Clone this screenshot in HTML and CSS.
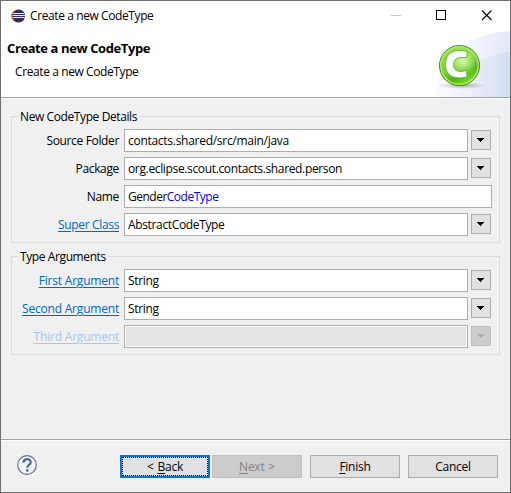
FILE: index.html
```html
<!DOCTYPE html>
<html lang="en">
<head>
<meta charset="utf-8">
<title>Create a new CodeType</title>
<link rel="stylesheet" href="styles.css">
</head>
<body>
<svg width="0" height="0" class="defs">
  <symbol id="arrow" viewBox="0 0 7 4"><path d="M0 0h7v1H6v1H5v1H4v1H3V3H2V2H1V1H0z" shape-rendering="crispEdges"/></symbol>
</svg>
<div class="window">
  <div class="banner">
    <svg class="banner-art" width="75" height="70" viewBox="0 0 75 70">
      <defs>
        <linearGradient id="sweep" x1="0" y1="0" x2="1" y2="0"><stop offset="0" stop-color="#f8fafe"/><stop offset=".55" stop-color="#f1f4fc"/><stop offset="1" stop-color="#e2e9f7"/></linearGradient>
        <linearGradient id="sweep2" x1="0" y1="0" x2="1" y2="0"><stop offset="0" stop-color="#f4f7fd"/><stop offset="1" stop-color="#ccd9f0"/></linearGradient>
        <linearGradient id="ball" x1="0.1" y1="0" x2=".7" y2="1"><stop offset="0" stop-color="#a4e45a"/><stop offset=".5" stop-color="#78d52e"/><stop offset=".75" stop-color="#4cb512"/><stop offset="1" stop-color="#8ce52d"/></linearGradient>
        <radialGradient id="glow" cx=".6" cy=".38" r=".42"><stop offset="0" stop-color="#d9f8b8"/><stop offset="1" stop-color="#c8f294" stop-opacity="0"/></radialGradient>
        <radialGradient id="shadow"><stop offset="0" stop-color="#777" stop-opacity=".65"/><stop offset="1" stop-color="#999" stop-opacity="0"/></radialGradient>
      </defs>
      <path d="M0 70C3 32 34 6 75 4V70z" fill="url(#sweep)"/>
      <path d="M16 70C25 43 45 28 75 25V70z" fill="url(#sweep2)" opacity=".7"/>
      <ellipse cx="27" cy="58.500" rx="24" ry="3.500" fill="url(#shadow)"/>
      <circle cx="24.500" cy="38.500" r="20" fill="url(#ball)" stroke="#587d31"/>
      <circle cx="24.500" cy="38.500" r="18.700" fill="none" stroke="#b5ed67" stroke-width="1.300"/>
      <circle cx="24.500" cy="38.500" r="18" fill="url(#glow)"/>
      <path d="M32.500 24.500l-1 6h-5c-5 0-8 2.500-8 7s2.500 7 7.500 7l5.500-1 .5 6.500c-13 3-21.500-1-21.500-12.500S18 21 32.500 24.500z" fill="#fff" stroke="#56b42a" stroke-width=".9"/>
    </svg>
    <div class="titlebar">
      <svg class="eclipse" width="15" height="14" viewBox="0 0 15 14">
        <circle cx="6.500" cy="7" r="6.500" fill="#f7941e"/><circle cx="7.700" cy="7" r="6.500" fill="#322b66"/>
        <path d="M2 4.500h11.500M1.500 6.500h13M2 8.500h12" stroke="#fff" stroke-width=".9"/>
      </svg>
      <span class="caption">Create a new CodeType</span>
      <svg class="controls" width="102" height="12" viewBox="0 0 102 12">
        <path d="M0 6.500h10" stroke="#c8c8c8" shape-rendering="crispEdges"/>
        <path d="M45.500 1.500h9v9h-9z" fill="none" stroke="#000" shape-rendering="crispEdges"/>
        <path d="M91 1.500l9.500 9.500M100.500 1.500l-9.500 9.500" stroke="#000" stroke-width="1.100"/>
      </svg>
    </div>
    <h1>Create a new CodeType</h1>
    <p>Create a new CodeType</p>
  </div>
  <main>
    <fieldset class="details">
      <legend>New CodeType Details</legend>
      <div class="row"><label>Source Folder</label><div class="field path">contacts.shared/src/main/java</div><button class="drop"><svg width="7" height="4"><use href="#arrow"/></svg></button></div>
      <div class="row"><label>Package</label><div class="field">org.eclipse.scout.contacts.shared.person</div><button class="drop"><svg width="7" height="4"><use href="#arrow"/></svg></button></div>
      <div class="row"><label>Name</label><div class="field wide">Gender<span class="suffix">CodeType</span></div></div>
      <div class="row"><label><a>Super Class</a></label><div class="field">AbstractCodeType</div><button class="drop"><svg width="7" height="4"><use href="#arrow"/></svg></button></div>
    </fieldset>
    <fieldset class="arguments">
      <legend>Type Arguments</legend>
      <div class="row"><label><a>First Argument</a></label><div class="field">String</div><button class="drop"><svg width="7" height="4"><use href="#arrow"/></svg></button></div>
      <div class="row"><label><a>Second Argument</a></label><div class="field">String</div><button class="drop"><svg width="7" height="4"><use href="#arrow"/></svg></button></div>
      <div class="row disabled"><label><a>Third Argument</a></label><div class="field"></div><button class="drop"><svg width="7" height="4"><use href="#arrow"/></svg></button></div>
    </fieldset>
  </main>
  <footer>
    <svg class="help" width="21" height="21" viewBox="0 0 21 21"><circle cx="10" cy="10" r="9.300" fill="#f3f5f8" stroke="#62738f" stroke-width="1.200"/><path d="M6.500 7.700C6.500 3 13.700 3 13.700 7.200C13.700 10 10.300 9.800 10.300 12.700" fill="none" stroke="#566c92" stroke-width="2.300"/><circle cx="10.300" cy="15.500" r="1.400" fill="#566c92"/></svg>
    <button class="push default">&lt; <u>B</u>ack</button>
    <button class="push next"><u>N</u>ext &gt;</button>
    <button class="push"><u>F</u>inish</button>
    <button class="push cancel">Cancel</button>
  </footer>
</div>
</body>
</html>
```
FILE: styles.css
```css
* { box-sizing: border-box; }
body {
  margin: 0;
  font: 12px/16px "Open Sans", "Noto Sans", sans-serif;
  letter-spacing: -0.35px;
  color: #000;
  overflow: hidden;
}
.defs { position: absolute; }
.window {
  width: 511px;
  height: 493px;
  display: flex;
  flex-direction: column;
  border: 1px solid #6e6e6e;
  background: #f0f0f0;
}
.banner {
  position: relative;
  height: 97px;
  background: #fff;
  border-bottom: 1px solid #a0a0a0;
}
.banner-art { position: absolute; right: 0; bottom: 0; }
.titlebar {
  position: relative;
  display: flex;
  height: 30px;
  padding: 8px 17px 0 10px;
}
.eclipse { flex: none; }
.caption { margin: -1px 0 0 4px; letter-spacing: -0.4px; }
.controls { margin-left: auto; }
h1 {
  margin: 9px 0 0 6px;
  font-size: 13px;
  line-height: 17px;
  font-weight: 700;
  letter-spacing: -0.4px;
}
p { position: relative; margin: 7px 0 0 14px; letter-spacing: -0.4px; }
main {
  flex: 1;
  border-top: 1px solid #fff;
  border-bottom: 1px solid #a0a0a0;
  padding: 10px 10px 0;
}
fieldset {
  position: relative;
  margin: 0;
  padding: 0;
  border: 0;
  display: block;
}
fieldset::before {
  content: "";
  position: absolute;
  inset: -9px 0 0;
  border: 1px solid #dcdcdc;
}
.details { height: 134px; }
.arguments { height: 106px; margin-top: 6px; }
legend {
  position: relative;
  z-index: 1;
  height: 16px;
  margin-left: 7px;
  padding: 0 2px;
  background: #f0f0f0;
  letter-spacing: -0.4px;
}
.row {
  position: relative;
  display: flex;
  height: 23px;
  margin: 0 0 5px 1px;
}
legend + .row { margin-top: 4px; }
label { width: 107px; text-align: right; line-height: 23px; }
.arguments label { letter-spacing: -0.2px; }
a { color: #0066cc; text-decoration: underline; text-underline-offset: 2px; }
.field {
  width: 344px;
  height: 23px;
  margin-left: 5px;
  padding-left: 3px;
  border: 1px solid #abadb3;
  background: #fff;
  line-height: 21px;
  white-space: nowrap;
}
.path { letter-spacing: -0.28px; }
.wide { width: 368px; letter-spacing: -0.5px; }
.suffix { color: #0000f0; }
button {
  font: inherit;
  letter-spacing: inherit;
  color: inherit;
  padding: 0;
  border: 1px solid #adadad;
  background: #e1e1e1;
}
.drop {
  display: flex;
  width: 20px;
  height: 20px;
  margin: 1px 0 0 3px;
  padding: 7px 0 0 5px;
}
.disabled a { color: #a6c8e8; }
.disabled .field { background: #e3e3e3; box-shadow: inset 0 0 0 1px #fff; }
.disabled .drop { background: #ccc; border-color: #bfbfbf; }
.disabled svg { fill: #adadad; }
footer {
  height: 52px;
  display: flex;
  padding: 14px 12px 0 16px;
  border-top: 1px solid #fff;
}
.push { width: 90px; height: 23px; margin-right: 8px; line-height: 21px; word-spacing: 1px; letter-spacing: -0.25px; }
.default {
  margin: 0 2px 0 82px;
  border: 2px solid #0078d7;
  line-height: 17px;
  outline: 1px dotted #000;
  outline-offset: -3px;
}
.next { background: #ccc; border-color: #bfbfbf; color: #838383; }
.cancel { margin-right: 0; }
u { text-underline-offset: 2px; }
```
